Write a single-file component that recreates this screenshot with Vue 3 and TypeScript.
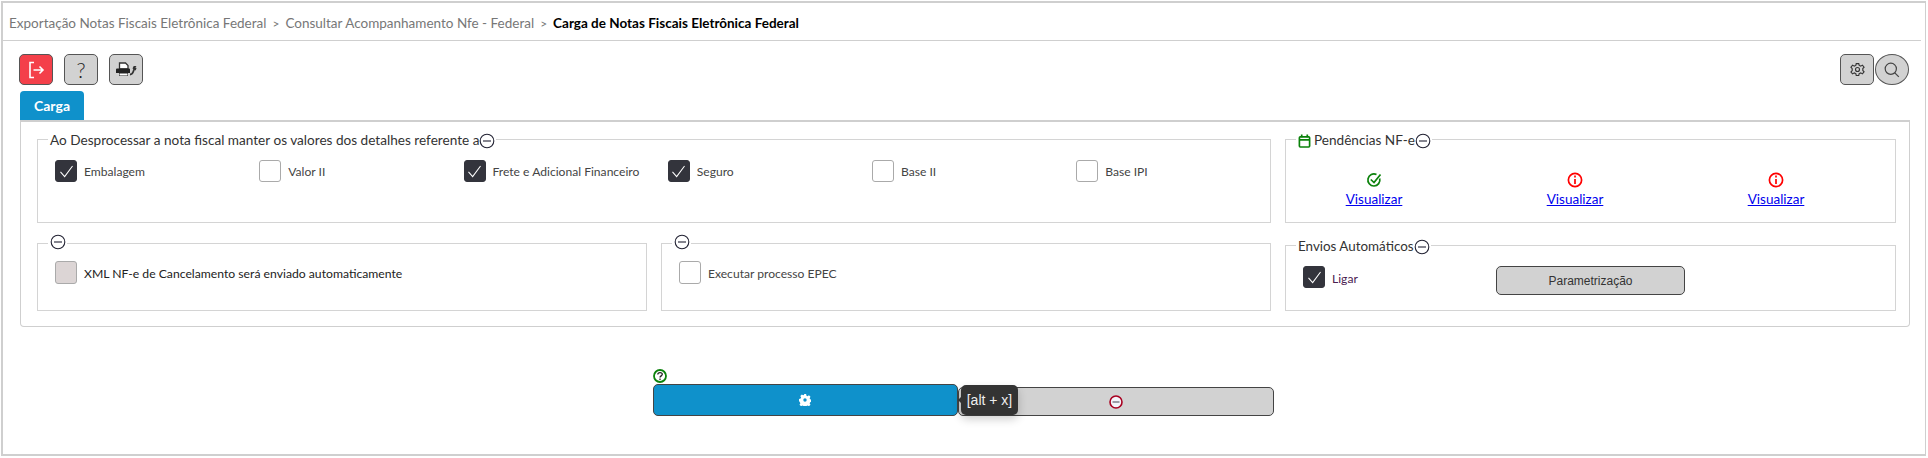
<script setup lang="ts">
const breadcrumbs: string[] = ['Exportação Notas Fiscais Eletrônica Federal', 'Consultar Acompanhamento Nfe - Federal']
const detalhes: { label: string; checked: boolean }[] = [
  { label: 'Embalagem', checked: true },
  { label: 'Valor II', checked: false },
  { label: 'Frete e Adicional Financeiro', checked: true },
  { label: 'Seguro', checked: true },
  { label: 'Base II', checked: false },
  { label: 'Base IPI', checked: false }
]
const pendencias: { ok: boolean }[] = [{ ok: true }, { ok: false }, { ok: false }]
</script>

<template>
  <div class="frame">
    <div class="crumbs">
      <template v-for="b in breadcrumbs" :key="b">
        <span class="crumb">{{ b }}</span><span class="sep">&gt;</span>
      </template>
      <span class="current">Carga de Notas Fiscais Eletrônica Federal</span>
    </div>

    <div class="toolbar">
      <button class="tool red" aria-label="Sair">
        <svg width="18" height="18" viewBox="0 0 18 18" fill="none" stroke="#fff" stroke-width="1.600">
          <path d="M7 1.500H3v15h4" />
          <path d="M6.500 9H16M12.500 5.500 16 9l-3.500 3.500" />
        </svg>
      </button>
      <button class="tool help" aria-label="Ajuda">?</button>
      <button class="tool" aria-label="Impressora">
        <svg width="22" height="15" viewBox="0 0 22 15">
          <path d="M4.500 1h6l2.500 2.500V7H4.500z" fill="#fff" stroke="#333" stroke-width="1.300" />
          <path d="M1 7.500A1 1 0 0 1 2 6.500h12a1 1 0 0 1 1 1V11h-2v3H4v-3H1z" fill="#222" />
          <path d="M4.500 11.500h8v2h-8z" fill="#fff" />
          <path d="M15 12.500c2.500 0 2.700-1.500 3.300-3l1-2.500" fill="none" stroke="#333" stroke-width="1.800" />
          <path d="M17.500 6.500 18.700 4h2.800l-1.200 1.600 1.300.5-1 2.400z" fill="#333" />
        </svg>
      </button>
      <div class="spacer"></div>
      <button class="tool gear" aria-label="Configurar">
        <svg width="15" height="15" viewBox="0 0 24 24" fill="none" stroke="#333" stroke-width="1.800">
          <circle cx="12" cy="12" r="3.200" />
          <path d="M10 2.500h4l.7 3 2.500 1.100 2.700-1.600 2.600 3.200-2 2.200v3.200l2 2.200-2.600 3.200-2.700-1.600-2.500 1.100-.7 3h-4l-.7-3-2.500-1.100-2.700 1.600L1.500 16l2-2.200v-3.200l-2-2.200L4.100 5l2.700 1.600 2.500-1.100z" />
        </svg>
      </button>
      <button class="tool round" aria-label="Pesquisar">
        <svg width="16" height="16" viewBox="0 0 20 20" fill="none" stroke="#444" stroke-width="1.500">
          <circle cx="8.500" cy="8.500" r="7" />
          <path d="m13.500 13.500 5 5" />
        </svg>
      </button>
    </div>

    <div class="tab">Carga</div>

    <div class="panel">
      <fieldset class="group wide first">
        <legend><span>Ao Desprocessar a nota fiscal manter os valores dos detalhes referente a</span>
          <svg class="minus" viewBox="0 0 16 16"><circle cx="8" cy="8" r="6.800" /><path d="M4 8h8" /></svg>
        </legend>
        <div class="checks">
          <label v-for="d in detalhes" :key="d.label" class="check">
            <span class="box" :class="{ on: d.checked }">
              <svg v-if="d.checked" width="15" height="13" viewBox="0 0 16 14" fill="none" stroke="#fff" stroke-width="1.100"><path d="M1.500 7.500 6 12.500 14.500 1" /></svg>
            </span>
            <span class="lbl">{{ d.label }}</span>
          </label>
        </div>
      </fieldset>

      <fieldset class="group first">
        <legend>
          <svg width="13" height="16" viewBox="0 0 14 16" fill="none" stroke="#0b820b" stroke-width="1.800">
            <rect x="1.500" y="3.500" width="11" height="11" rx="1" />
            <path d="M1.500 6.800h11M4 1v3M10 1v3" />
          </svg>
          <span class="gap1">Pendências NF-e</span>
          <svg class="minus" viewBox="0 0 16 16"><circle cx="8" cy="8" r="6.800" /><path d="M4 8h8" /></svg>
        </legend>
        <div class="pend">
          <div v-for="(p, i) in pendencias" :key="i" class="pend-item">
            <svg v-if="p.ok" width="16" height="16" viewBox="0 0 16 16" fill="none" stroke="#0b820b" stroke-width="1.700">
              <path d="M13.700 6.500A6 6 0 1 1 10.500 2.600" />
              <path d="M4.800 7.500 8 10.500 14.500 2.500" />
            </svg>
            <svg v-else width="16" height="16" viewBox="0 0 16 16" fill="none" stroke="#f00" stroke-width="1.700">
              <circle cx="8" cy="8" r="6.600" />
              <path d="M8 7v5M8 3.600v1.900" />
            </svg>
            <a href="#" class="link">Visualizar</a>
          </div>
        </div>
      </fieldset>

      <fieldset class="group second">
        <legend><svg class="minus" viewBox="0 0 16 16"><circle cx="8" cy="8" r="6.800" /><path d="M4 8h8" /></svg></legend>
        <label class="check up">
          <span class="box off"></span>
          <span class="lbl dark">XML NF-e de Cancelamento será enviado automaticamente</span>
        </label>
      </fieldset>

      <fieldset class="group second">
        <legend><svg class="minus" viewBox="0 0 16 16"><circle cx="8" cy="8" r="6.800" /><path d="M4 8h8" /></svg></legend>
        <label class="check up">
          <span class="box"></span>
          <span class="lbl">Executar processo EPEC</span>
        </label>
      </fieldset>

      <fieldset class="group tall">
        <legend><span>Envios Automáticos</span>
          <svg class="minus" viewBox="0 0 16 16"><circle cx="8" cy="8" r="6.800" /><path d="M4 8h8" /></svg>
        </legend>
        <div class="auto">
          <label class="check ligar">
            <span class="box on">
              <svg width="15" height="13" viewBox="0 0 16 14" fill="none" stroke="#fff" stroke-width="1.100"><path d="M1.500 7.500 6 12.500 14.500 1" /></svg>
            </span>
            <span class="lbl purple">Ligar</span>
          </label>
          <button class="param">Parametrização</button>
        </div>
      </fieldset>
    </div>

    <div class="actions">
      <svg class="qmark" width="14" height="14" viewBox="0 0 14 14" fill="none" stroke="#0b820b" stroke-width="1.800">
        <circle cx="7" cy="7" r="6" />
        <path d="M4.800 5.500C4.800 3 9.300 3 9.300 5.300c0 1.500-2.300 1.700-2.300 3.300M7 9.600v1.500" stroke="#222" stroke-width="1.300" />
      </svg>
      <div class="btn-row">
        <button class="act primary" aria-label="Executar">
          <svg width="12" height="12" viewBox="0 0 14 14"><path fill="#fff" fill-rule="evenodd" d="M5.700 0h2.600l.4 1.900 1.300.6 1.600-1 1.800 1.800-1 1.600.6 1.300 1.900.4v2.600l-1.900.4-.6 1.300 1 1.600-1.800 1.800-1.600-1-1.300.6-.4 1.900H5.700l-.4-1.900-1.300-.6-1.600 1-1.800-1.800 1-1.600-.6-1.300L0 8.300V5.700l1.900-.4.6-1.300-1-1.600L3.300.6l1.600 1 1.300-.6zM7 5a2 2 0 1 0 0 4 2 2 0 0 0 0-4z" /></svg>
        </button>
        <button class="act neutral" aria-label="Cancelar">
          <svg width="14" height="14" viewBox="0 0 14 14"><circle cx="7" cy="7" r="6" fill="#f4f4fa" stroke="#a80020" stroke-width="1.600" /><path d="M3.500 7h7" stroke="#445" stroke-width="1" /></svg>
        </button>
        <div class="tip">[alt + x]</div>
      </div>
    </div>
  </div>
</template>

<style>
html, body { margin: 0; padding: 0; background: #fff; }
</style>

<style scoped>
.frame {
  box-sizing: border-box;
  width: 1925px;
  height: 455px;
  margin: 1px 0 0 1px;
  border: 1px solid #cfcfcf;
  border-width: 2px 1px 2px 2px;
  font-family: Lato, "Liberation Sans", sans-serif;
  color: #333;
}
.crumbs {
  box-sizing: border-box;
  height: 38px;
  margin-right: 4px;
  padding: 12px 0 0 6px;
  border-bottom: 1px solid #cfcfcf;
  font-size: 13.500px;
  line-height: 16px;
  color: #777;
  white-space: nowrap;
}
.sep { margin: 0 6px; font-size: 12px; }
.current { font-weight: 700; color: #000; }
.toolbar {
  display: flex;
  align-items: flex-start;
  padding: 13px 16px 0 16px;
}
.spacer { flex: 1; }
.tool {
  box-sizing: border-box;
  width: 34px;
  height: 31px;
  margin-right: 11px;
  padding: 0;
  display: flex;
  align-items: center;
  justify-content: center;
  background: #d2d2d2;
  border: 1.500px solid #555;
  border-radius: 5px;
}
.tool.red { background: #f4404a; }
.tool.help { font: 300 21px Lato, sans-serif; color: #222; }
.tool.gear { margin-right: 1px; }
.tool.round { margin-right: 0; border-radius: 50%; }
.tab {
  box-sizing: border-box;
  width: 64px;
  height: 29px;
  margin: 6px 0 0 17px;
  background: #0f91cb;
  border-radius: 4px 4px 0 0;
  color: #fff;
  font-size: 14px;
  font-weight: 700;
  line-height: 30px;
  text-align: center;
}
.panel {
  box-sizing: border-box;
  width: 1890px;
  height: 207px;
  margin-left: 17px;
  padding: 8px 0 0 16px;
  border: 1px solid #cfcfcf;
  border-top-width: 2px;
  border-radius: 0 0 4px 4px;
  display: grid;
  grid-template-columns: 610px 610px 611px;
  grid-template-rows: 93px 77px;
  column-gap: 14px;
  row-gap: 11px;
}
.group {
  box-sizing: border-box;
  min-width: 0;
  margin: 0;
  padding: 0 0 0 17px;
  border: 1px solid #d4d4d4;
}
.group.wide { grid-column: span 2; }
.group legend {
  box-sizing: border-box;
  display: flex;
  align-items: center;
  height: 18px;
  margin-left: -7px;
  padding: 3px 1px 0 2px;
  font-size: 13.600px;
  line-height: 15px;
}
.group.second legend { padding: 0 1px 3px 2px; }
.group.tall legend { height: 22px; font-size: 13.400px; }
.minus {
  flex: none;
  width: 16px;
  height: 16px;
  fill: none;
  stroke: #223;
  stroke-width: 1.100;
}
.gap1 { margin-left: 3px; }
.checks { display: flex; margin-top: 12px; }
.check { display: flex; align-items: flex-start; width: 204.250px; flex: none; }
.check.up { width: auto; margin-top: 9px; }
.box {
  box-sizing: border-box;
  flex: none;
  width: 22px;
  height: 22px;
  margin-right: 7px;
  display: flex;
  align-items: center;
  justify-content: center;
  background: #fff;
  border: 1px solid #aaa;
  border-radius: 3px;
}
.up .box { height: 23px; }
.box.on { background: #33343c; border-color: #33343c; }
.box.off { background: #dcd5d5; }
.lbl { font-size: 12.100px; line-height: 23px; color: #444; }
.up .lbl { padding-top: 1px; }
.lbl.dark { color: #222; font-size: 12.200px; }
.lbl.purple { color: #4a2050; }
.pend {
  display: grid;
  grid-template-columns: repeat(3, 120px);
  column-gap: 81px;
  margin: 24px 0 0 11px;
}
.pend-item {
  display: flex;
  flex-direction: column;
  align-items: center;
  gap: 3px;
}
.link { color: #00e; font-size: 13.500px; line-height: 17px; text-decoration: underline; }
.auto { display: flex; align-items: flex-start; padding-top: 10px; }
.ligar { width: 193px; }
.ligar .lbl { line-height: 25px; }
.param {
  box-sizing: border-box;
  width: 189px;
  height: 29px;
  background: #d2d2d2;
  border: 1.500px solid #444;
  border-radius: 5px;
  font: 12px "Liberation Sans", sans-serif;
  color: #333;
}
.actions {
  width: 621px;
  margin: 42px 0 0 650px;
}
.qmark { display: block; margin-bottom: 1px; }
.btn-row {
  position: relative;
  display: flex;
  align-items: flex-end;
  height: 32px;
}
.act {
  box-sizing: border-box;
  display: flex;
  align-items: center;
  justify-content: center;
  padding: 0;
  border: 1.500px solid #444;
  border-radius: 5px;
}
.primary { width: 305px; height: 32px; background: #0f91cb; }
.neutral { width: 317px; height: 29px; background: #d2d2d2; }
.tip {
  position: absolute;
  left: 308px;
  top: 1px;
  width: 57px;
  height: 30px;
  background: #333;
  border-radius: 5px;
  box-shadow: 0 4px 10px rgba(0, 0, 0, 0.2);
  color: #eee;
  font: 14px/30px "Liberation Sans", sans-serif;
  text-align: center;
}
.tip::before {
  content: "";
  position: absolute;
  left: -3px;
  top: 12px;
  border-style: solid;
  border-width: 3px 3px 3px 0;
  border-color: transparent #333 transparent transparent;
}
</style>
